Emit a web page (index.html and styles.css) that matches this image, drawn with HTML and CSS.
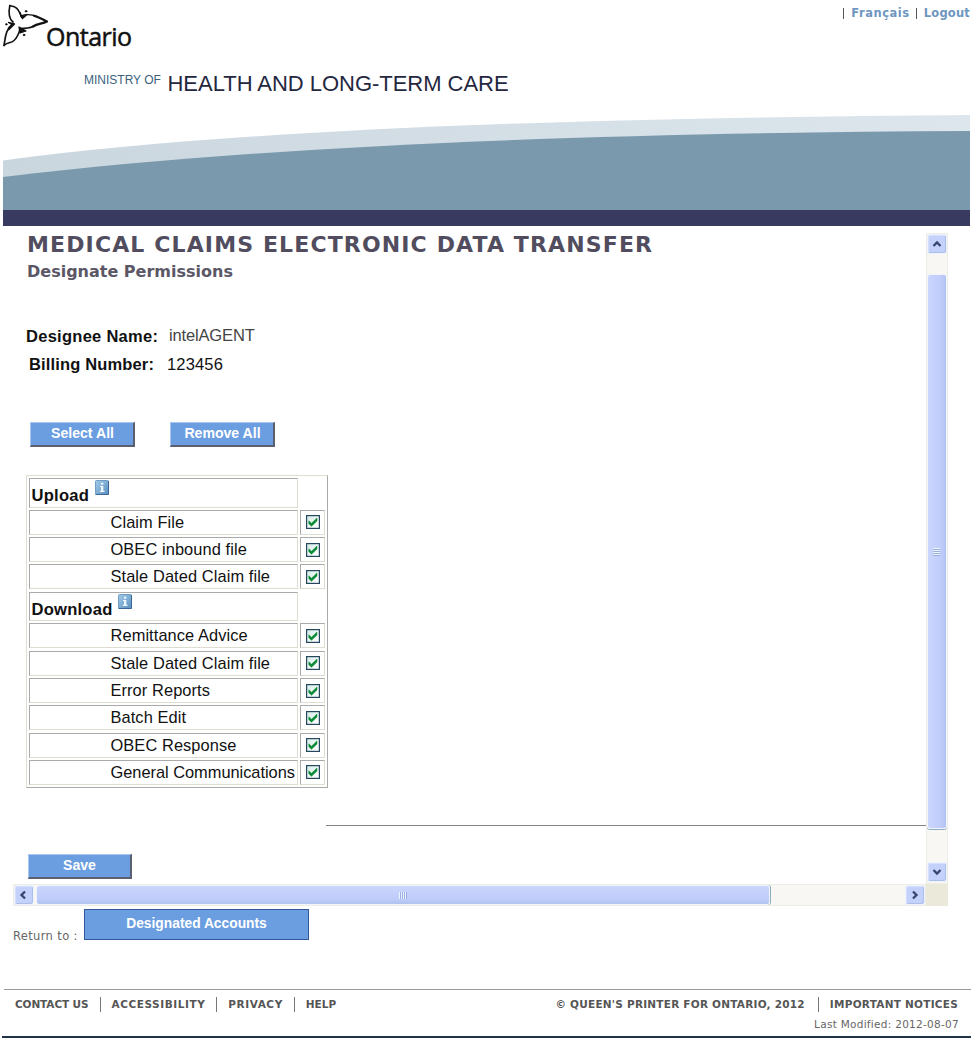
FILE: index.html
```html
<!DOCTYPE html>
<html lang="en">
<head>
<meta charset="utf-8">
<title>Medical Claims Electronic Data Transfer</title>
<link rel="stylesheet" href="styles.css">
</head>
<body>
<svg class="defs" width="0" height="0" aria-hidden="true">
  <defs>
    <linearGradient id="info-fill" x1="0" y1="0" x2="1" y2="1"><stop offset="0" stop-color="#a3cbe8"/><stop offset="1" stop-color="#5b8fc0"/></linearGradient>
    <linearGradient id="box-fill" x1="0" y1="0" x2="1" y2="1"><stop offset="0" stop-color="#d5ece6"/><stop offset="1" stop-color="#ffffff"/></linearGradient>
    <symbol id="check" viewBox="0 0 14 14"><rect x=".6" y=".6" width="12.8" height="12.8" fill="url(#box-fill)" stroke="#27475f" stroke-width="1.2"/><path d="M2.800 5.800 5.500 8.200 11 3V6L5.500 11.300 2.800 8.800Z" fill="#0b8a35" stroke="#0b8a35" stroke-width=".5"/></symbol>
    <symbol id="info" viewBox="0 0 14 15"><rect x=".5" y=".5" width="13" height="14" rx="1" fill="url(#info-fill)" stroke="#6f9dc4"/><path d="M.5 14.5h13V1" fill="none" stroke="#3a6796"/><path d="M6 2.8h2.3v2H6zM5 6h3.3v4.8h1.2v1.1H4.8v-1.1H6V7.1H5z" fill="#eef7fc"/></symbol>
  </defs>
</svg>
<header class="header">
  <div class="topbar">
    <div class="logo">
      <svg class="trillium" width="48" height="48" viewBox="0 0 48 48" fill="none" stroke="#111" stroke-linecap="round" stroke-linejoin="round">
        <path d="M13 22C8.500 18.500 8.300 13 9.800 5.500" stroke-width="1.600"/>
        <path d="M9.800 5.500C12 6.500 14 6.200 15.500 7.500 18.500 9 19.500 12 21 16" stroke-width="1.400"/>
        <path d="M21 16C27 13.500 32 14.500 37 16.500" stroke-width="1.400"/>
        <path d="M34 15.700C40 17.300 43 19.500 47 21.500 42 24 38 23.500 33 26.500" stroke-width="2.200"/>
        <path d="M33 26.500C29 28.500 25 28.500 20 28.500" stroke-width="1.400"/>
        <path d="M13 23.500C5 30 5.500 38 4 45.500" stroke-width="1.700"/>
        <path d="M4 45.500C7 42 11 43.500 14 40.500 18 37 19 33 20 29" stroke-width="1.500"/>
        <path d="M20 12.500 21.500 17.500 27 14.500 22.500 18.500ZM8.500 22.500 14.500 24 9 29.500 12 24.500ZM19 27 20 33 26 31 21.500 28.500Z" fill="#111" stroke-width="1.300"/>
        <circle cx="26" cy="11.300" r=".8" fill="#111"/><circle cx="6.300" cy="24.300" r=".7" fill="#111"/><circle cx="24" cy="35" r=".8" fill="#111"/>
      </svg>
      <span class="wordmark">Ontario</span>
    </div>
    <nav class="toplinks"><span class="bar"></span><a class="french">Français</a><span class="bar"></span><a class="logout">Logout</a></nav>
  </div>
  <div class="ministry"><span class="ministry-of">MINISTRY OF</span><span class="ministry-name">HEALTH AND LONG-TERM CARE</span></div>
  <svg class="swoosh" width="967" height="112" viewBox="3 114 967 112">
    <defs><linearGradient id="pale"><stop offset="0" stop-color="#cad6de"/><stop offset="1" stop-color="#dde6ed"/></linearGradient></defs>
    <path d="M3 160.500C230 130 560 118 970 115V140L3 190Z" fill="url(#pale)"/>
    <path d="M3 177C260 146 590 133 970 131V210H3Z" fill="#7a99ad"/>
    <path d="M3 210H970V226H3Z" fill="#383b5f"/>
  </svg>
</header>
<div class="frame">
  <main class="content">
    <h1 class="title">MEDICAL CLAIMS ELECTRONIC DATA TRANSFER</h1>
    <h2 class="subtitle">Designate Permissions</h2>
    <div class="field first"><b class="name-label">Designee Name:</b><span class="name-value">intelAGENT</span></div>
    <div class="field second"><b>Billing Number:</b><span>123456</span></div>
    <div class="actions"><button class="btn">Select All</button><button class="btn">Remove All</button></div>
    <div class="perms">
      <div class="cell head">Upload<svg class="info"><use href="#info"/></svg></div><div></div>
      <div class="cell">Claim File</div><div class="cell tick"><svg><use href="#check"/></svg></div>
      <div class="cell">OBEC inbound file</div><div class="cell tick"><svg><use href="#check"/></svg></div>
      <div class="cell">Stale Dated Claim file</div><div class="cell tick"><svg><use href="#check"/></svg></div>
      <div class="cell head">Download<svg class="info"><use href="#info"/></svg></div><div></div>
      <div class="cell">Remittance Advice</div><div class="cell tick"><svg><use href="#check"/></svg></div>
      <div class="cell">Stale Dated Claim file</div><div class="cell tick"><svg><use href="#check"/></svg></div>
      <div class="cell">Error Reports</div><div class="cell tick"><svg><use href="#check"/></svg></div>
      <div class="cell">Batch Edit</div><div class="cell tick"><svg><use href="#check"/></svg></div>
      <div class="cell">OBEC Response</div><div class="cell tick"><svg><use href="#check"/></svg></div>
      <div class="cell full">General Communications</div><div class="cell tick"><svg><use href="#check"/></svg></div>
    </div>
    <div class="rule"></div>
    <button class="btn save">Save</button>
  </main>
  <div class="scroll vertical">
    <div class="arrow"><svg width="10" height="8" viewBox="0 0 10 8"><path d="M1.500 6 5 2.500 8.500 6"/></svg></div>
    <div class="thumb"><i></i></div>
    <div class="arrow"><svg width="10" height="8" viewBox="0 0 10 8"><path d="M1.500 2 5 5.500 8.500 2"/></svg></div>
  </div>
  <div class="scroll horizontal">
    <div class="arrow left"><svg width="8" height="10" viewBox="0 0 8 10"><path d="M6 1.500 2.500 5 6 8.500"/></svg></div>
    <div class="thumb"><i></i></div>
    <div class="arrow"><svg width="8" height="10" viewBox="0 0 8 10"><path d="M2 1.500 5.500 5 2 8.500"/></svg></div>
  </div>
  <div class="corner"></div>
</div>
<div class="return"><span class="return-label">Return to :</span><button class="accounts">Designated Accounts</button></div>
<footer class="footer">
  <div class="footer-row">
    <nav class="footer-links"><a class="contact">CONTACT US</a><a class="access">ACCESSIBILITY</a><a class="privacy">PRIVACY</a><a class="help">HELP</a></nav>
    <div class="footer-links"><span class="printer">© QUEEN'S PRINTER FOR ONTARIO, 2012</span><a class="notices">IMPORTANT NOTICES</a></div>
  </div>
  <div class="modified">Last Modified: 2012-08-07</div>
</footer>
</body>
</html>
```
FILE: styles.css
```css
* { box-sizing: border-box; }
body { margin: 0; width: 975px; height: 1042px; overflow: hidden; background: #fff; color: #111; font-family: "Liberation Sans", Arial, sans-serif; white-space: nowrap; }
button { font-family: inherit; padding: 0; }
.defs { display: block; }
.header { height: 226px; padding-left: 3px; display: flex; flex-direction: column; }
.topbar { height: 66px; display: flex; justify-content: space-between; padding-right: 5px; margin-left: -3px; }
.logo { display: flex; }
.trillium { flex: none; }
.wordmark { font: 25px/34px "Open Sans", "Noto Sans", sans-serif; letter-spacing: -.5px; margin: 19px 0 0 -2px; -webkit-text-stroke: .5px #111; }
.toplinks { display: flex; align-items: center; height: 26px; font: bold 11.500px/26px "DejaVu Sans", sans-serif; color: #6f96c0; }
.toplinks .bar { width: 1px; height: 11px; background: #555; margin: 0 7px 0 6px; }
.french { letter-spacing: .55px; }
.logout { letter-spacing: .2px; }
.ministry { height: 48px; padding-left: 81px; display: flex; }
.ministry-of { font-size: 12px; line-height: 28px; color: #3b5f7d; width: 83.500px; }
.ministry-name { font-size: 22px; line-height: 35px; letter-spacing: -.03px; color: #25273f; }
.swoosh { display: block; flex: none; }
.frame { margin: 7px 0 0 13px; width: 935px; height: 673px; display: grid; grid-template: 651px 22px / 912.500px 22.500px; }
.content { padding-left: 13px; overflow: hidden; display: flex; flex-direction: column; align-items: flex-start; }
.title { margin: 0 0 0 1px; font: bold 22px/24px "DejaVu Sans", sans-serif; letter-spacing: 1.130px; color: #514d5e; }
.subtitle { margin: 0 0 0 1px; font: bold 16px/29px "DejaVu Sans", sans-serif; color: #5b5766; }
.field { display: flex; height: 27px; font-size: 16.500px; line-height: 27px; }
.field.first { margin-top: 37px; }
.name-label { width: 143px; letter-spacing: .27px; }
.name-value { color: #444; line-height: 25px; letter-spacing: -.15px; }
.field.second { padding-left: 3px; margin-top: 1px; }
.field.second b { width: 138px; letter-spacing: .15px; }
.field.second span { letter-spacing: .15px; }
.actions { display: flex; gap: 35px; margin: 44px 0 0 4px; }
.btn { width: 105px; height: 25px; background: #6b9ee0; color: #fff; border: solid; border-width: 1px 2px 2px 1px; border-color: #a9c8f0 #5b5f6e #5b5f6e #a9c8f0; font-size: 14.100px; font-weight: bold; line-height: 20px; padding: 0 0 2px 1px; }
.perms { width: 302px; height: 313px; margin-top: 28px; padding: 2px; border: 1px solid; border-color: #ddddd0 #aaa #aaa #ddddd0; display: grid; grid-template-columns: 268.500px 25px; grid-template-rows: 29.500px repeat(3, 25px) 29.500px repeat(6, 25px); gap: 2.300px 2.300px; }
.cell { border: 1px solid; border-color: #aaa #ddddd0 #ddddd0 #aaa; padding-left: 80.500px; font-size: 16.400px; line-height: 23px; letter-spacing: .09px; }
.cell.full { letter-spacing: -.02px; }
.cell.head { padding: 5px 0 0 1.500px; font-weight: bold; font-size: 16.600px; letter-spacing: .22px; display: flex; }
.info { width: 14px; height: 15px; margin: -4px 0 0 5.500px; }
.cell.tick { padding: 4.500px 0 0 5px; }
.tick svg { display: block; width: 14px; height: 14px; }
.rule { height: 1px; align-self: stretch; margin: 37px 0 0 300px; background: #858585; }
.save { width: 104px; margin: 28px 0 0 1.500px; }
.scroll { display: flex; background: #f8f7f3; border: 1px solid #eeede5; }
.arrow { flex: none; display: flex; align-items: center; justify-content: center; width: 20px; height: 20px; background: #c4d1fa; border: 1px solid #edf3ff; border-radius: 3px; box-shadow: inset -1px -1px #abbfe8, inset 1px 1px #d5defb; }
.arrow svg { fill: none; stroke: #34466f; stroke-width: 2.300; }
.arrow.left { padding-right: 3px; }
.thumb { display: flex; align-items: center; justify-content: center; border: 1px solid #f1f5ff; border-radius: 3px; background: #c4d1fa; }
.vertical { flex-direction: column; padding-bottom: 1px; }
.vertical .thumb { height: 555px; margin: 20px 0 33px; background: linear-gradient(90deg, #cbd6fd, #bfcbfa 75%, #b0c3ef); box-shadow: 0 1px #8eafbd; }
.horizontal .thumb { width: 734px; margin: 0 134px 0 2px; background: linear-gradient(#cbd6fd, #bfcbfa 75%, #b0c3ef); box-shadow: 1px 0 #8eafbd; }
.horizontal { justify-content: space-between; }
.vertical .thumb { flex: none; margin: 20px 0 auto; }
.vertical i { width: 7px; height: 8px; background: repeating-linear-gradient(#eef3ff 0 1px, #98aedc 1px 2px); }
.horizontal i { width: 8px; height: 7px; background: repeating-linear-gradient(90deg, #eef3ff 0 1px, #98aedc 1px 2px); }
.corner { background: #eae9da; }
.return { display: flex; padding-left: 13px; height: 83px; }
.return-label { width: 71px; padding-top: 21px; font: 11.500px/18px "DejaVu Sans", sans-serif; letter-spacing: .35px; color: #666; }
.accounts { width: 225px; height: 31px; margin-top: 3px; background: #6b9ee0; color: #fff; border: 1px solid #31589b; font-size: 13.800px; font-weight: bold; line-height: 26px; padding-bottom: 2px; }
.footer { margin-left: 2px; width: 969px; height: 49px; border-bottom: 2px solid #203449; font-family: "DejaVu Sans", sans-serif; }
.footer-row { display: flex; justify-content: space-between; height: 28px; margin-left: 2px; padding: 7px 13px 0 11px; border-top: 1px solid #999; }
.footer-links { display: flex; height: 15px; font-size: 10.500px; font-weight: bold; line-height: 15px; color: #555; }
.footer-links > * + * { border-left: 1px solid #777; padding-left: 11px; margin-left: 11px; }
.contact { letter-spacing: -.1px; }
.access, .privacy { letter-spacing: .56px; }
.printer { letter-spacing: .23px; }
.footer-links .notices { letter-spacing: .25px; margin-left: 13px; }
.modified { padding-right: 12px; text-align: right; font-size: 10.500px; line-height: 15px; letter-spacing: .28px; color: #666; }
```
